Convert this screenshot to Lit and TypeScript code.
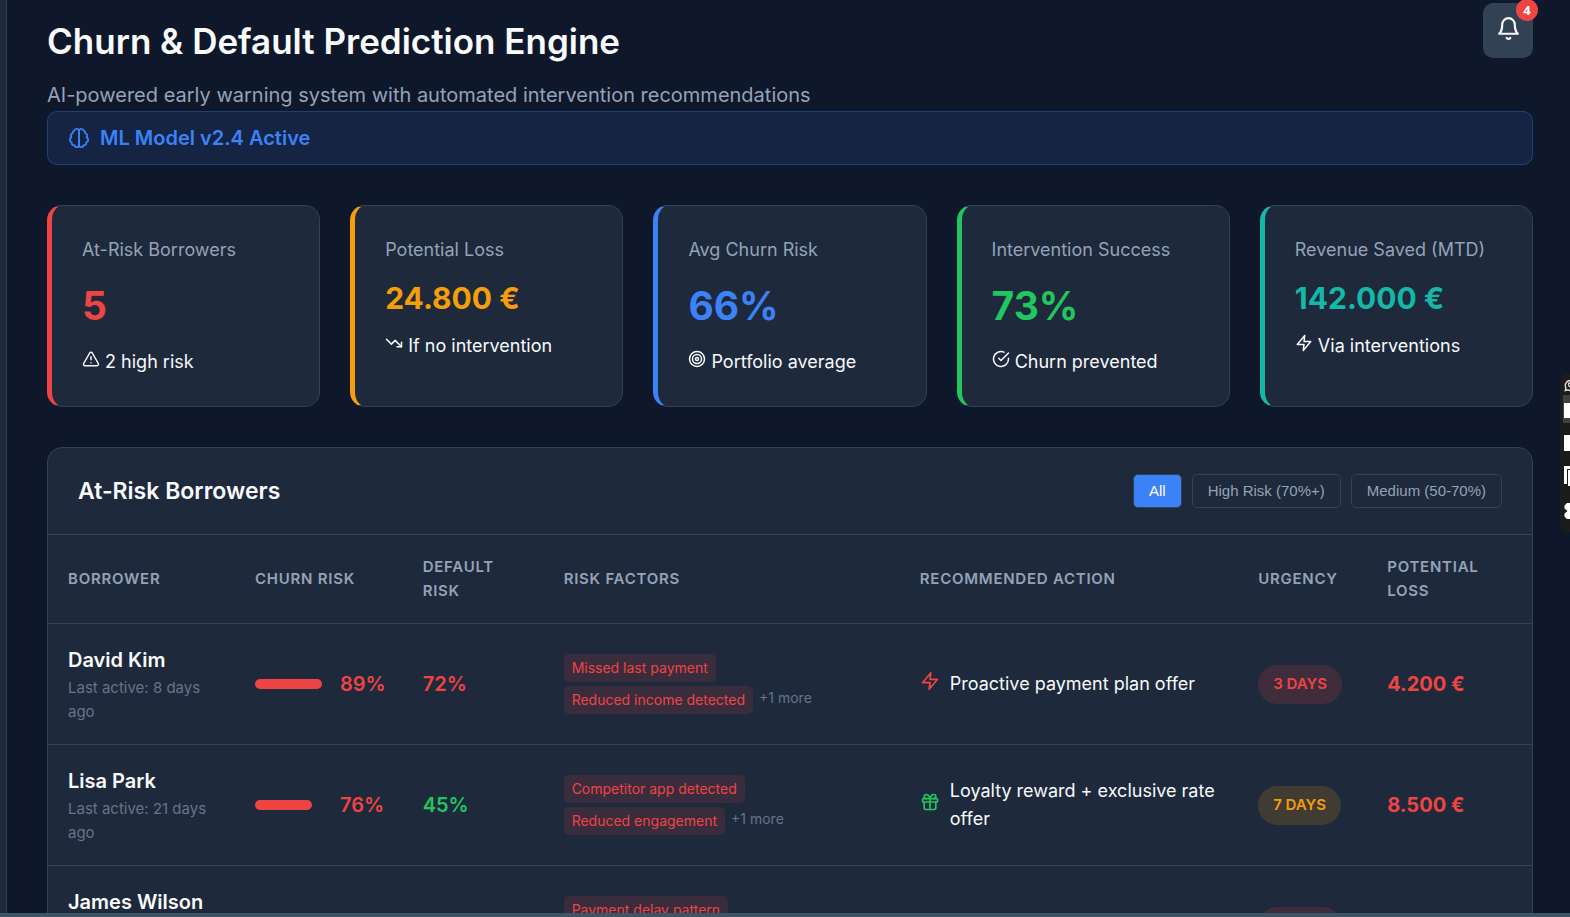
import { LitElement, html, svg, css } from "lit";
import { customElement, property, state } from "lit/decorators.js";
import { classMap } from "lit/directives/class-map.js";

type Tone = "red" | "amber" | "blue" | "green" | "teal";

const ICONS: Record<string, unknown> = {
  bell: svg`<path d="M6 8a6 6 0 0 1 12 0c0 7 3 9 3 9H3s3-2 3-9"/><path d="M10.3 21a1.94 1.94 0 0 0 3.4 0"/>`,
  brain: svg`<path d="M9.5 2A2.5 2.5 0 0 1 12 4.5v15a2.5 2.5 0 0 1-4.96.44 2.5 2.5 0 0 1-2.96-3.08 3 3 0 0 1-.34-5.58 2.5 2.5 0 0 1 1.32-4.24 2.5 2.5 0 0 1 1.98-3A2.5 2.5 0 0 1 9.5 2Z"/><path d="M14.5 2A2.5 2.5 0 0 0 12 4.5v15a2.5 2.5 0 0 0 4.96.44 2.5 2.5 0 0 0 2.96-3.08 3 3 0 0 0 .34-5.58 2.5 2.5 0 0 0-1.32-4.24 2.5 2.5 0 0 0-1.98-3A2.5 2.5 0 0 0 14.5 2Z"/>`,
  alert: svg`<path d="m21.73 18-8-14a2 2 0 0 0-3.48 0l-8 14A2 2 0 0 0 4 21h16a2 2 0 0 0 1.73-3Z"/><path d="M12 9v4"/><path d="M12 17h.01"/>`,
  down: svg`<polyline points="22 17 13.5 8.5 8.5 13.5 2 7"/><polyline points="16 17 22 17 22 11"/>`,
  target: svg`<circle cx="12" cy="12" r="10"/><circle cx="12" cy="12" r="6"/><circle cx="12" cy="12" r="2"/>`,
  check: svg`<path d="M22 11.08V12a10 10 0 1 1-5.93-9.14"/><path d="m9 11 3 3L22 4"/>`,
  zap: svg`<polygon points="13 2 3 14 12 14 11 22 21 10 12 10 13 2"/>`,
  gift: svg`<rect x="3" y="8" width="18" height="4" rx="1"/><path d="M12 8v13"/><path d="M19 12v7a2 2 0 0 1-2 2H7a2 2 0 0 1-2-2v-7"/><path d="M7.5 8a2.5 2.5 0 0 1 0-5A4.8 8 0 0 1 12 8a4.8 8 0 0 1 4.5-5 2.5 2.5 0 0 1 0 5"/>`,
};

const icon = (name: string, size: number) => html`<svg
  width=${size} height=${size} viewBox="0 0 24 24" fill="none" stroke="currentColor"
  stroke-width="2" stroke-linecap="round" stroke-linejoin="round" aria-hidden="true"
>${ICONS[name]}</svg>`;

const palette = css`
  .red { --tone: #ef4444; }
  .amber { --tone: #f59e0b; }
  .blue { --tone: #3b82f6; }
  .green { --tone: #22c55e; }
  .teal { --tone: #14b8a6; }
`;

interface Kpi {
  label: string;
  value: string;
  note: string;
  icon: string;
  tone: Tone;
  money?: boolean;
}

interface Borrower {
  name: string;
  lastActive: string;
  churn: number;
  defaultRisk: number;
  factors: string[];
  more: number;
  action: string;
  actionIcon: string;
  actionTone: Tone;
  urgency: string;
  urgencyTone: Tone;
  loss: string;
}

const KPIS: Kpi[] = [
  { label: "At-Risk Borrowers", value: "5", note: "2 high risk", icon: "alert", tone: "red" },
  { label: "Potential Loss", value: "24.800 €", note: "If no intervention", icon: "down", tone: "amber", money: true },
  { label: "Avg Churn Risk", value: "66%", note: "Portfolio average", icon: "target", tone: "blue" },
  { label: "Intervention Success", value: "73%", note: "Churn prevented", icon: "check", tone: "green" },
  { label: "Revenue Saved (MTD)", value: "142.000 €", note: "Via interventions", icon: "zap", tone: "teal", money: true },
];

const BORROWERS: Borrower[] = [
  {
    name: "David Kim", lastActive: "8 days ago", churn: 89, defaultRisk: 72,
    factors: ["Missed last payment", "Reduced income detected"], more: 1,
    action: "Proactive payment plan offer", actionIcon: "zap", actionTone: "red",
    urgency: "3 days", urgencyTone: "red", loss: "4.200 €",
  },
  {
    name: "Lisa Park", lastActive: "21 days ago", churn: 76, defaultRisk: 45,
    factors: ["Competitor app detected", "Reduced engagement"], more: 1,
    action: "Loyalty reward + exclusive rate offer", actionIcon: "gift", actionTone: "green",
    urgency: "7 days", urgencyTone: "amber", loss: "8.500 €",
  },
  {
    name: "James Wilson", lastActive: "12 days ago", churn: 68, defaultRisk: 58,
    factors: ["Payment delay pattern", "Reduced engagement"], more: 1,
    action: "Proactive payment plan offer", actionIcon: "zap", actionTone: "red",
    urgency: "5 days", urgencyTone: "red", loss: "3.600 €",
  },
];

@customElement("kpi-card")
class KpiCard extends LitElement {
  @property({ attribute: false }) kpi!: Kpi;

  static styles = [
    palette,
    css`
      :host { display: flex; }
      .card {
        flex: 1;
        padding: 30px;
        border: 1px solid #334155;
        border-left: 5px solid var(--tone);
        border-radius: 15px;
        background: #1e293b;
      }
      .label { font-size: 18px; line-height: 28px; color: #94a3b8; }
      .value {
        margin: 10px 0;
        font-size: 39px;
        font-weight: 700;
        line-height: 64px;
        color: var(--tone);
      }
      .money { font-size: 30px; line-height: 48px; }
      .note { font-size: 18px; line-height: 28px; }
    `,
  ];

  render() {
    const k = this.kpi;
    return html`
      <article class="card ${k.tone}">
        <div class="label">${k.label}</div>
        <div class=${classMap({ value: true, money: !!k.money })}>${k.value}</div>
        <div class="note">${icon(k.icon, 18)} ${k.note}</div>
      </article>
    `;
  }
}

@customElement("borrower-panel")
class BorrowerPanel extends LitElement {
  @state() private filter = "all";

  private filters = [
    { id: "all", label: "All" },
    { id: "high", label: "High Risk (70%+)" },
    { id: "medium", label: "Medium (50-70%)" },
  ];

  static styles = [
    palette,
    css`
      :host {
        display: block;
        border: 1px solid #334155;
        border-radius: 15px;
        background: #1e293b;
      }
      .head {
        display: flex;
        align-items: center;
        justify-content: space-between;
        padding: 25px 30px;
        border-bottom: 1px solid #334155;
      }
      h2 { margin: 0; font-size: 23px; font-weight: 600; line-height: 36px; }
      .filters { display: flex; gap: 10px; }
      .filters button {
        padding: 7px 15px;
        border: 1px solid #334155;
        border-radius: 5px;
        background: transparent;
        color: #94a3b8;
        font: 15px/18px "Liberation Sans", Arial, sans-serif;
        cursor: pointer;
      }
      .filters .active { background: #3b82f6; color: #fff; }
      table { width: 100%; table-layout: fixed; border-collapse: separate; border-spacing: 0; }
      .c-name { width: 12.6%; }
      .c-churn { width: 11.3%; }
      .c-default { width: 9.5%; }
      .c-factors { width: 24%; }
      .c-action { width: 22.8%; }
      .c-urgency { width: 8.7%; }
      .c-loss { width: 11.1%; }
      th, td {
        padding: 20px;
        border-bottom: 1px solid #334155;
        text-align: left;
        vertical-align: middle;
      }
      th {
        font-size: 15px;
        font-weight: 600;
        line-height: 24px;
        letter-spacing: 0.05em;
        text-transform: uppercase;
        color: #94a3b8;
      }
      .name { font-size: 20px; font-weight: 600; line-height: 32px; }
      .active-ago { font-size: 15px; line-height: 24px; color: #64748b; }
      .churn { display: flex; align-items: center; gap: 10px; }
      .track { flex: none; width: 75px; }
      .fill { height: 10px; border-radius: 5px; background: var(--tone); }
      .figure { font-size: 20px; font-weight: 600; line-height: 32px; color: var(--tone); }
      .strong { font-weight: 700; }
      .factors { display: flex; flex-wrap: wrap; align-items: flex-start; gap: 4px 6px; }
      .chip {
        padding: 3px 8px;
        border-radius: 5px;
        background: rgba(239, 68, 68, 0.13);
        color: #ef4444;
        font-size: 14px;
        line-height: 22px;
      }
      .more { font-size: 14px; line-height: 24px; color: #64748b; }
      .action { display: flex; align-items: center; gap: 10px; font-size: 18px; line-height: 28px; }
      .action-icon { flex: none; font-size: 20px; line-height: 32px; color: var(--tone); }
      .pill {
        display: inline-block;
        padding: 7px 15px 8px;
        border-radius: 20px;
        background: color-mix(in srgb, var(--tone) 16%, transparent);
        color: var(--tone);
        font-size: 15px;
        font-weight: 600;
        line-height: 24px;
        text-transform: uppercase;
        white-space: nowrap;
      }
    `,
  ];

  private row(b: Borrower) {
    return html`
      <tr>
        <td>
          <div class="name">${b.name}</div>
          <div class="active-ago">Last active: ${b.lastActive}</div>
        </td>
        <td>
          <div class="churn red">
            <div class="track"><div class="fill" style="width:${b.churn}%"></div></div>
            <span class="figure">${b.churn}%</span>
          </div>
        </td>
        <td><span class="figure ${b.defaultRisk >= 50 ? "red" : "green"}">${b.defaultRisk}%</span></td>
        <td>
          <div class="factors">
            ${b.factors.map((f) => html`<span class="chip">${f}</span>`)}
            <span class="more">+${b.more} more</span>
          </div>
        </td>
        <td>
          <div class="action">
            <div class="action-icon ${b.actionTone}">${icon(b.actionIcon, 20)}</div>
            <span>${b.action}</span>
          </div>
        </td>
        <td><span class="pill ${b.urgencyTone}">${b.urgency}</span></td>
        <td><span class="figure strong red">${b.loss}</span></td>
      </tr>
    `;
  }

  render() {
    const rows = BORROWERS.filter((b) =>
      this.filter === "high" ? b.churn >= 70 : this.filter === "medium" ? b.churn >= 50 && b.churn < 70 : true,
    );
    return html`
      <div class="head">
        <h2>At-Risk Borrowers</h2>
        <div class="filters">
          ${this.filters.map(
            (f) => html`<button
              type="button"
              class=${classMap({ active: this.filter === f.id })}
              aria-pressed=${this.filter === f.id}
              @click=${() => (this.filter = f.id)}
            >${f.label}</button>`,
          )}
        </div>
      </div>
      <table>
        <colgroup>
          <col class="c-name" /><col class="c-churn" /><col class="c-default" /><col class="c-factors" />
          <col class="c-action" /><col class="c-urgency" /><col class="c-loss" />
        </colgroup>
        <thead>
          <tr>
            <th>Borrower</th><th>Churn Risk</th><th>Default Risk</th><th>Risk Factors</th>
            <th>Recommended Action</th><th>Urgency</th><th>Potential Loss</th>
          </tr>
        </thead>
        <tbody>${rows.map((b) => this.row(b))}</tbody>
      </table>
    `;
  }
}

@customElement("app-root")
class AppRoot extends LitElement {
  static styles = css`
    :host {
      display: flex;
      position: relative;
      height: 100vh;
      overflow: hidden;
      background: #0f172a;
      color: #f8fafc;
      font-family: Inter, sans-serif;
    }
    .rail { flex: none; width: 6px; background: #1e293b; border-right: 1px solid #334155; }
    main { flex: 1; min-width: 0; padding: 3px 37px 0 40px; }
    header { display: flex; justify-content: space-between; align-items: flex-start; }
    .titles { padding-top: 10px; }
    h1 { margin: 0 0 10px; font-size: 35px; font-weight: 600; line-height: 56px; }
    .lead { margin: 0; font-size: 20px; line-height: 32px; color: #94a3b8; }
    .bell {
      position: relative;
      display: flex;
      padding: 13px 12px 17px 13px;
      border: 0;
      border-radius: 10px;
      background: #334155;
      color: #f8fafc;
      font-family: inherit;
    }
    .badge {
      position: absolute;
      top: -4px;
      right: -5px;
      width: 22px;
      border-radius: 11px;
      background: #ef4444;
      color: #fff;
      font-family: "Open Sans", sans-serif;
      font-size: 13px;
      font-weight: 700;
      line-height: 22px;
      text-align: center;
    }
    .model {
      display: flex;
      align-items: center;
      gap: 10px;
      padding: 10px 20px;
      border: 1px solid rgba(59, 130, 246, 0.3);
      border-radius: 10px;
      background: rgba(59, 130, 246, 0.12);
      color: #3b82f6;
      font-size: 20px;
      font-weight: 600;
      line-height: 32px;
    }
    .kpis { display: grid; grid-template-columns: repeat(5, 1fr); gap: 30px; margin: 40px 0; }
    .dock { position: absolute; top: 374px; right: 0; width: 10px; height: 158px; }
    .edge { position: absolute; left: 0; right: 0; bottom: 0; height: 4px; background: #3d5567; }
  `;

  render() {
    return html`
      <div class="rail"></div>
      <main>
        <header>
          <div class="titles">
            <h1>Churn &amp; Default Prediction Engine</h1>
            <p class="lead">AI-powered early warning system with automated intervention recommendations</p>
          </div>
          <button class="bell" type="button" aria-label="Notifications">
            ${icon("bell", 25)}<span class="badge">4</span>
          </button>
        </header>
        <div class="model">${icon("brain", 22)}<span>ML Model v2.4 Active</span></div>
        <section class="kpis">${KPIS.map((k) => html`<kpi-card .kpi=${k}></kpi-card>`)}</section>
        <borrower-panel></borrower-panel>
      </main>
      <svg class="dock" viewBox="0 0 10 158" aria-hidden="true">
        <path d="M10 0H6a6 6 0 0 0-6 6v146a6 6 0 0 0 6 6h4z" fill="#1c1c1c" />
        <path d="M10 6.500a5 5 0 0 0-4 7.500l-.8 2.500 2.500-.6 2.300.6" fill="none" stroke="#e5e5e5" stroke-width="1.300" />
        <path d="M10 9q-2.500 0-1 3l1 1" fill="none" stroke="#e5e5e5" stroke-width="1.300" />
        <path d="M3 21h7v28H3z" fill="#404040" />
        <path d="M4 29h6v15H4zM4 61h6v16H4z" fill="#fff" />
        <path d="M4 92h6v3H7v15H4z" fill="#fff" />
        <path d="M8 96h2v16H8z" fill="#fff" />
        <path d="M10 129H7l-2.500 2.500v3L7.500 137l-3 2.500v3L7 145h3z" fill="#fff" />
      </svg>
      <div class="edge"></div>
    `;
  }
}
